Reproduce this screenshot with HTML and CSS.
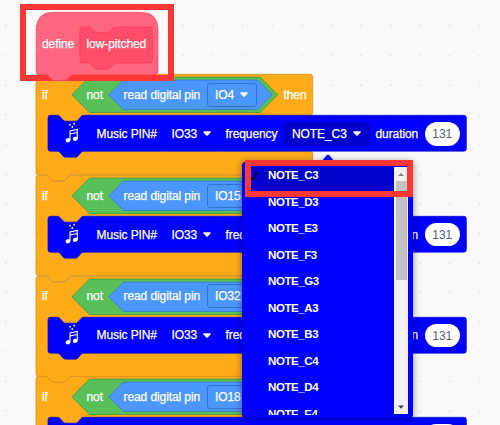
FILE: index.html
```
<!DOCTYPE html>
<html lang="en">
<head>
<meta charset="utf-8">
<title>Block workspace</title>
<link rel="stylesheet" href="styles.css">
</head>
<body>
<svg class="defs" width="0" height="0">
  <defs>
    <pattern id="grid" x="-9.3" y="11.2" width="29.62" height="29.62" patternUnits="userSpaceOnUse"><path d="M14 14.8h1.8M14.9 13.9v1.8" stroke="#dedede" stroke-width=".8"/></pattern>
    <symbol id="frame" overflow="visible">
      <path fill="#ffab19" stroke="#cf8b17" stroke-width=".7" d="M0 2.5Q0 .3 2.5 .3H9Q11 .3 12 1.5L15 5Q16.3 6.3 18 6.3H27Q29 6.3 30 5L33 1.5Q34 .3 36 .3H274Q276.7 .3 276.7 3V38.500Q276.700 41.200 274 41.200H48Q46 41.200 45 42.400L42 46Q41 47.200 39 47.200H30Q28 47.200 27 46L24 42.400Q23 41.200 21 41.200H14.500Q12 41.200 12 43.700V74.700Q12 77.200 14.500 77.200H274Q276.700 77.200 276.700 80V98Q276.700 100.700 274 100.700H36Q34 100.700 33 102L30 105.500Q29 106.700 27 106.700H18Q16 106.700 15 105.500L12 102Q11 100.700 9 100.700H2.500Q0 100.700 0 98Z"/>
      <path fill="#59c059" stroke="#389438" stroke-width=".7" d="M53.500 3.100H224.200L241.700 20.800L224.200 38.500H53.500L35.800 20.800Z"/>
      <path fill="#4c97ff" stroke="#3373cc" stroke-width=".7" d="M87.500 6.100H221.500L236.200 20.800L221.500 35.500H87.500L72.800 20.800Z"/>
      <path fill="#00f" stroke="#0000c4" stroke-width=".6" d="M12 43.700Q12 41.300 14.500 41.300H21Q23 41.300 24 42.500L27 46Q28 47.200 30 47.200H39Q41 47.200 42 46L45 42.500Q46 41.300 48 41.300H428Q430.400 41.300 430.400 43.700V74.700Q430.400 77.200 428 77.200H48Q46 77.200 45 78.400L42 82Q41 83.200 39 83.200H30Q28 83.200 27 82L24 78.400Q23 77.200 21 77.200H14.500Q12 77.200 12 74.700Z"/>
    </symbol>
    <symbol id="note" viewBox="0 0 16 22"><g fill="#fff"><ellipse cx="4" cy="18.200" rx="2.500" ry="2.100" transform="rotate(-15 4 18.200)"/><ellipse cx="11.300" cy="16.800" rx="2.500" ry="2" transform="rotate(-15 11.300 16.800)"/><circle cx="6" cy="2.700" r=".9"/><circle cx="8.300" cy="5" r=".9"/><circle cx="10.200" cy="1.700" r=".9"/></g><path d="M6 18V9L13.300 7.500V16.500M6 12L13.300 10.500" fill="none" stroke="#fff" stroke-width="1.100"/></symbol>
    <symbol id="arrow" viewBox="0 0 8 5"><path fill="#fff" d="M1 .2H7Q8.300 .5 7.500 1.500L4.700 4.400Q4 5 3.300 4.400L.5 1.500Q-.3 .5 1 .2Z"/></symbol>
  </defs>
</svg>
<main class="workspace">
  <svg class="dots" width="500" height="425"><rect width="500" height="425" fill="url(#grid)"/></svg>
  <div class="script">
    <div class="define">
      <svg class="shape" width="124" height="70"><path fill="#ff6680" stroke="#ff4264" stroke-width=".7" d="M.2 17Q1 .3 17 .3H105Q121.500 .3 122 17V60Q122 62.500 119.500 62.500H36L30 68.500H17L11 62.500H2.500Q.2 62.500 .2 60Z"/><path fill="#ff4d6a" stroke="#ff3355" stroke-width=".7" d="M44 17.500Q44 15 46.500 15H52Q54 15 55 16L58.500 19.500Q60 20.700 61.500 20.700H71Q73 20.700 74 19.500L77.500 16Q78.500 15 80 15H114Q116.300 15 116.300 17.500V48.500Q116.300 51 114 51H80Q78.500 51 77.500 52L74 55.700Q73 57 71 57H61.500Q60 57 58.500 55.700L55 52Q54 51 52 51H46.500Q44 51 44 48.500Z"/></svg>
      <span class="define-word">define</span><span class="define-name">low-pitched</span>
    </div>
    <section class="if-block">
      <svg class="shape" width="432" height="108"><use href="#frame"/></svg>
      <div class="condition"><span class="if">if</span><span class="not">not</span><span class="read">read digital pin</span><span class="field pin">IO4<svg class="arrow"><use href="#arrow"/></svg></span><span class="then">then</span></div>
      <div class="music"><svg class="note"><use href="#note"/></svg><span class="label">Music PIN#</span><span class="field io">IO33<svg class="arrow"><use href="#arrow"/></svg></span><span class="frequency">frequency</span><span class="field tone open">NOTE_C3<svg class="arrow"><use href="#arrow"/></svg></span><span class="duration">duration</span><span class="value">131</span></div>
    </section>
    <section class="if-block">
      <svg class="shape" width="432" height="108"><use href="#frame"/></svg>
      <div class="condition"><span class="if">if</span><span class="not">not</span><span class="read">read digital pin</span><span class="field pin">IO15</span></div>
      <div class="music"><svg class="note"><use href="#note"/></svg><span class="label">Music PIN#</span><span class="field io">IO33<svg class="arrow"><use href="#arrow"/></svg></span><span class="frequency">frequency</span><span class="field tone"></span><span class="duration">duration</span><span class="value">131</span></div>
    </section>
    <section class="if-block">
      <svg class="shape" width="432" height="108"><use href="#frame"/></svg>
      <div class="condition"><span class="if">if</span><span class="not">not</span><span class="read">read digital pin</span><span class="field pin">IO32</span></div>
      <div class="music"><svg class="note"><use href="#note"/></svg><span class="label">Music PIN#</span><span class="field io">IO33<svg class="arrow"><use href="#arrow"/></svg></span><span class="frequency">frequency</span><span class="field tone"></span><span class="duration">duration</span><span class="value">131</span></div>
    </section>
    <section class="if-block">
      <svg class="shape" width="432" height="108"><use href="#frame"/></svg>
      <div class="condition"><span class="if">if</span><span class="not">not</span><span class="read">read digital pin</span><span class="field pin">IO18</span></div>
      <div class="music"><span class="value last"></span></div>
    </section>
  </div>
  <div class="menu">
    <svg class="pointer" width="16" height="9"><path fill="#0000e6" d="M0 9L6.500 1.500Q8 0 9.500 1.500L16 9Z"/></svg>
    <ul class="options">
      <li class="selected"><svg class="check" width="9" height="11"><path d="M1 6.500L3 9L7.500 1" fill="none" stroke="#000030" stroke-width="1.700"/></svg>NOTE_C3</li>
      <li>NOTE_D3</li><li>NOTE_E3</li><li>NOTE_F3</li><li>NOTE_G3</li><li>NOTE_A3</li><li>NOTE_B3</li><li>NOTE_C4</li><li>NOTE_D4</li><li>NOTE_E4</li>
    </ul>
    <div class="scrollbar"><svg width="14" height="14"><path fill="#858585" d="M4 9L7 6L10 9Z"/></svg><div class="thumb"></div><svg class="down" width="14" height="14"><path fill="#404040" d="M4 5.500H10L7 8.800Z"/></svg></div>
  </div>
  <div class="mark mark-define"></div>
  <div class="mark mark-option"></div>
</main>
</body>
</html>
```
FILE: styles.css
```
* { box-sizing: border-box; }
body { margin: 0; overflow: hidden; font: 12px/16px "Liberation Sans", Arial, sans-serif; letter-spacing: -.09px; }
.defs { position: absolute; }
.workspace { position: relative; width: 500px; height: 425px; overflow: hidden; background: #f9f9f9; color: #fff; }
.dots { position: absolute; inset: 0; }
.script { position: absolute; left: 36px; top: 11.5px; width: 432px; -webkit-text-stroke: .25px currentColor; white-space: nowrap; }
.shape { position: absolute; left: 0; top: 0; z-index: -1; overflow: visible; }
.define, .if-block { position: relative; isolation: isolate; }
.define { height: 62.8px; display: flex; align-items: center; padding: 3px 0 0 6px; z-index: 2; }
.define-word { width: 44.5px; }
.if-block { height: 100.7px; }
.condition { height: 41.2px; display: flex; align-items: center; }
.if { width: 50.5px; padding-left: 6px; }
.not { width: 37px; }
.read { width: 83px; }
.field { height: 24px; display: flex; align-items: center; border: 1px solid #3373cc; border-radius: 3px; padding-left: 8px; }
.pin { width: 50.5px; padding-left: 7.5px; }
.arrow { width: 8px; height: 5px; margin-left: 6px; }
.then { margin-left: 26.5px; }
.music { height: 36px; padding: 1px 0 0 28px; display: flex; align-items: center; }
.note { width: 16px; height: 22px; margin-top: -1px; }
.label { width: 67px; margin-left: 16.5px; }
.io { width: 57.5px; border-color: #0000e6; padding-left: 7px; }
.frequency { width: 58.5px; margin-left: 4.5px; }
.tone { width: 86px; border-color: #0000cd; padding-left: 7px; }
.open { background: #0000cd; }
.duration { width: 49px; margin-left: 5.5px; }
.value { width: 35.5px; height: 23.5px; line-height: 24px; border-radius: 12px; text-align: center; background: #fff; color: #575e75; -webkit-text-stroke: 0; }
.last { margin-left: 360px; }
.menu { position: absolute; left: 241.5px; top: 162px; width: 171px; height: 256px; padding: 4px; display: flex; background: #00f; border: 1px solid #0000e6; border-radius: 3px; box-shadow: 0 0 7px 1px #0005; }
.pointer { position: absolute; left: 77.5px; top: -9px; }
.options { width: 148px; height: 248px; margin: 0; padding: 0; overflow: hidden; list-style: none; font-size: 11.5px; letter-spacing: -.42px; font-weight: bold; }
.options li { position: relative; height: 26.5px; padding-left: 21.5px; line-height: 17px; }
.options .selected { background: #0000cd; }
.check { position: absolute; left: 3px; top: 4px; }
.scrollbar { width: 14px; height: 247px; display: flex; flex-direction: column; background: #f1f1f1; }
.thumb { width: 11px; height: 99px; margin-left: 2px; background: #c1c1c1; }
.down { margin-top: auto; }
.mark { position: absolute; border: 6px solid #ff3636; }
.mark-define { left: 20px; top: 4px; width: 154px; height: 77px; }
.mark-option { left: 245px; top: 160px; width: 168px; height: 37px; }
```
